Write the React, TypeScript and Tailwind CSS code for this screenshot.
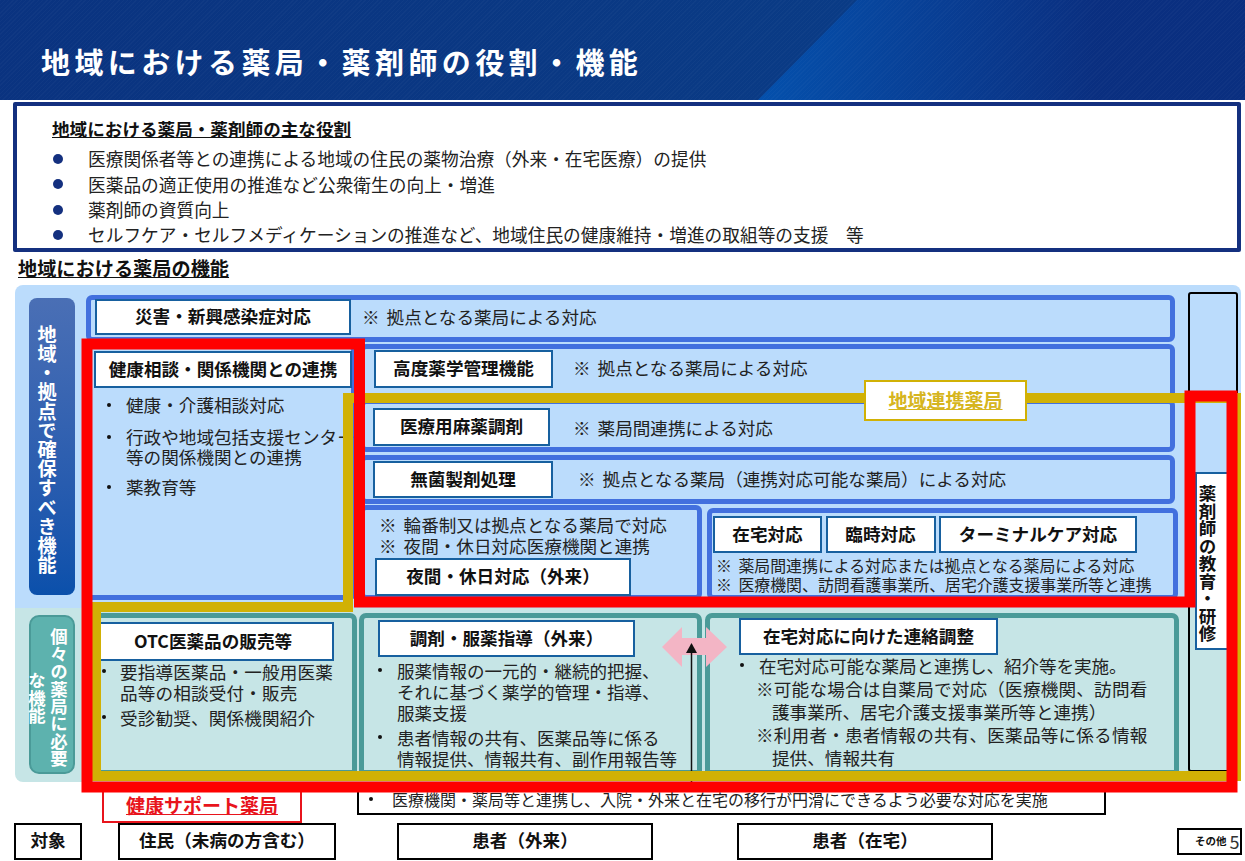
import type { ReactNode } from 'react';
import clsx from 'clsx';

function Tag({ className, children }: { className?: string; children: ReactNode }) {
  return (
    <div
      className={clsx(
        'flex shrink-0 items-center justify-center border-[2.5px] border-[#17609f] bg-white pb-[2px] text-[17.6px] leading-none font-bold text-[#111]',
        className,
      )}
    >
      {children}
    </div>
  );
}

function Dot() {
  return <span className="mt-[8px] mr-[15px] h-[4px] w-[4px] shrink-0 rounded-full bg-[#111]" />;
}

const roles = [
  '医療関係者等との連携による地域の住民の薬物治療（外来・在宅医療）の提供',
  '医薬品の適正使用の推進など公衆衛生の向上・増進',
  '薬剤師の資質向上',
  'セルフケア・セルフメディケーションの推進など、地域住民の健康維持・増進の取組等の支援　等',
];

export default function App() {
  return (
    <div className="relative h-[861px] w-[1245px] overflow-hidden whitespace-nowrap bg-white font-['Noto_Sans_CJK_JP',sans-serif] text-[#222]">
      {/* Header */}
      <div className="relative flex h-[100px] items-center overflow-hidden bg-linear-to-r from-[#0a3380] to-[#0a3f88] pt-[22px] pl-[41px]">
        <div className="absolute inset-0 bg-linear-to-r from-[#0450ac] from-[61%] to-[#0a2f80] to-[88%] [clip-path:polygon(857px_0,100%_0,100%_100%,758px_100%)]" />
        <div className="absolute inset-0 bg-[repeating-linear-gradient(135deg,rgba(255,255,255,0.025)_0_1px,transparent_1px_3px)]" />
        <h1 className="relative text-[29px] leading-none font-bold tracking-[4.4px] text-white">
          地域における薬局・薬剤師の役割・機能
        </h1>
      </div>

      {/* 主な役割 */}
      <div className="mt-[2px] ml-[13px] h-[150px] w-[1228px] rounded-[2px] border-4 border-[#14307f] pt-[12px] pl-[35px]">
        <div className="text-[17.6px] leading-[22px] font-bold text-[#111] underline">
          地域における薬局・薬剤師の主な役割
        </div>
        <ul className="mt-[7px]">
          {roles.map((role) => (
            <li key={role} className="flex h-[25.3px] items-center pb-[1px] text-[17.7px] leading-none">
              <span className="mr-[25px] ml-[1px] h-[10px] w-[10px] rounded-full bg-[#14307f]" />
              {role}
            </li>
          ))}
        </ul>
      </div>

      <div className="mt-[4px] pl-[18px] text-[19.2px] leading-[24px] font-bold text-[#111] underline">
        地域における薬局の機能
      </div>

      {/* 地域・拠点で確保すべき機能 */}
      <div className="mt-[5px] ml-[15px] flex h-[323px] w-[1226px] rounded-t-[8px] bg-[#bbdcfc] pt-[10px] pl-[14px]">
        <div className="mt-[3px] flex h-[297px] w-[46px] shrink-0 rounded-[8px] bg-linear-to-b from-[#4a6fb5] to-[#0a50ab] pt-[27px] pl-[5px]">
          <span className="text-[19.2px] leading-[26px] font-bold text-white [writing-mode:vertical-rl]">
            地域・拠点で確保すべき機能
          </span>
        </div>
        <div className="ml-[11px] w-[1092px]">
          <div className="flex h-[47px] w-[1089px] items-center rounded-[6px] border-[5px] border-[#4270de] pb-[3px] pl-[4px]">
            <Tag className="h-[36px] w-[256px]">災害・新興感染症対応</Tag>
            <span className="-mt-[1px] ml-[11px] text-[17.6px] leading-none [word-spacing:3px]">※ 拠点となる薬局による対応</span>
          </div>

          <div className="mt-[2px] flex">
            <div className="h-[256px] w-[270px] shrink-0 rounded-[6px] border-[5px] border-[#4270de] pt-[2px] pl-[3px]">
              <Tag className="h-[37px] w-[258px]">健康相談・関係機関との連携</Tag>
              <ul className="mt-[7px] pl-[13px] text-[17.6px] leading-[20px]">
                <li className="flex">
                  <Dot />
                  健康・介護相談対応
                </li>
                <li className="mt-[12px] flex">
                  <Dot />
                  <span>
                    行政や地域包括支援センター
                    <br />
                    等の関係機関との連携
                  </span>
                </li>
                <li className="mt-[10px] flex">
                  <Dot />
                  薬教育等
                </li>
              </ul>
            </div>

            <div className="ml-[4px] w-[818px]">
              <div className="flex h-[57px] w-[815px] items-center rounded-[6px] border-[5px] border-[#4270de] pb-[7px] pl-[9px]">
                <Tag className="h-[38px] w-[179px]">高度薬学管理機能</Tag>
                <span className="-mt-[2px] ml-[20px] text-[17.6px] leading-none [word-spacing:3px]">※ 拠点となる薬局による対応</span>
              </div>
              <div className="-mt-[2px] flex h-[53px] w-[815px] items-center rounded-[6px] border-[5px] border-[#4270de] pt-[3px] pl-[8px]">
                <Tag className="h-[38px] w-[177px]">医療用麻薬調剤</Tag>
                <span className="mt-[2px] ml-[23px] text-[17.6px] leading-none [word-spacing:3px]">※ 薬局間連携による対応</span>
              </div>
              <div className="mt-[3px] flex h-[49px] w-[815px] items-center rounded-[6px] border-[5px] border-[#4270de] pl-[8px]">
                <Tag className="h-[37px] w-[180px]">無菌製剤処理</Tag>
                <span className="-mt-[1px] ml-[25px] text-[17.6px] leading-none [word-spacing:3px]">
                  ※ 拠点となる薬局（連携対応可能な薬局）による対応
                </span>
              </div>
              <div className="mt-[1px] flex items-start">
                <div className="h-[95px] w-[342px] rounded-[6px] border-[5px] border-[#4270de] pt-[3.5px] pl-[10px]">
                  <div className="pl-[4px] text-[17.6px] leading-[21px] [word-spacing:3px]">
                    ※ 輪番制又は拠点となる薬局で対応
                    <br />※ 夜間・休日対応医療機関と連携
                  </div>
                  <Tag className="mt-[2.5px] h-[38px] w-[256px]">夜間・休日対応（外来）</Tag>
                </div>
                <div className="mt-[3px] ml-[5px] h-[92px] w-[471px] rounded-[6px] border-[5px] border-[#4270de] pt-[3px] pl-[1px]">
                  <div className="flex gap-[3.5px]">
                    <Tag className="h-[37px] w-[109px]">在宅対応</Tag>
                    <Tag className="h-[37px] w-[110px]">臨時対応</Tag>
                    <Tag className="h-[37px] w-[198px]">ターミナルケア対応</Tag>
                  </div>
                  <div className="mt-[3px] pl-[3px] text-[15.9px] leading-[19px] [word-spacing:3px]">
                    ※ 薬局間連携による対応または拠点となる薬局による対応
                    <br />※ 医療機関、訪問看護事業所、居宅介護支援事業所等と連携
                  </div>
                </div>
              </div>
            </div>
          </div>
        </div>
      </div>

      {/* 個々の薬局に必要な機能 */}
      <div className="ml-[15px] flex h-[174px] w-[1226px] rounded-b-[8px] bg-[#c6e5e6] pt-[5px] pl-[14px]">
        <div className="mt-[2px] flex h-[159px] w-[46px] shrink-0 rounded-[10px] border-2 border-[#4a9a98] bg-[#5db2ae] pt-[11px]">
          <span className="-ml-[5.5px] text-[17.4px] leading-[22px] font-bold text-white [writing-mode:vertical-rl]">
            <span className="block">個々の薬局に必要</span>
            <span className="block pt-[44px]">な機能</span>
          </span>
        </div>

        <div className="ml-[17px] h-[162px] w-[265px] shrink-0 rounded-t-[7px] border-[5px] border-[#4a9a98] pt-[4px]">
          <Tag className="-ml-[5px] h-[39px] w-[242px]">OTC医薬品の販売等</Tag>
          <ul className="-mt-[0.5px] pl-[5px] text-[17.6px] leading-[21px] tracking-[0.15px]">
            <li className="flex">
              <span className="mt-[8px] mr-[14px] h-[4px] w-[4px] shrink-0 rounded-full bg-[#111]" />
              <span>
                要指導医薬品・一般用医薬
                <br />
                品等の相談受付・販売
              </span>
            </li>
            <li className="mt-[4px] flex">
              <span className="mt-[8px] mr-[14px] h-[4px] w-[4px] shrink-0 rounded-full bg-[#111]" />
              受診勧奨、関係機関紹介
            </li>
          </ul>
        </div>

        <div className="ml-[2px] h-[162px] w-[343px] shrink-0 rounded-t-[7px] border-[5px] border-[#4a9a98] pt-[2px] pl-[14px]">
          <Tag className="h-[37px] w-[257px]">調剤・服薬指導（外来）</Tag>
          <ul className="mt-[2.5px] text-[17.5px] leading-[21px]">
            <li className="flex">
              <span className="mt-[8px] mr-[15px] h-[4px] w-[4px] shrink-0 rounded-full bg-[#111]" />
              <span>
                服薬情報の一元的・継続的把握、
                <br />
                それに基づく薬学的管理・指導、
                <br />
                服薬支援
              </span>
            </li>
            <li className="mt-[4px] flex">
              <span className="mt-[8px] mr-[15px] h-[4px] w-[4px] shrink-0 rounded-full bg-[#111]" />
              <span>
                患者情報の共有、医薬品等に係る
                <br />
                情報提供、情報共有、副作用報告等
              </span>
            </li>
          </ul>
        </div>

        <div className="ml-[3px] h-[162px] w-[474px] shrink-0 rounded-t-[7px] border-[5px] border-[#4a9a98] pl-[29px]">
          <Tag className="h-[37px] w-[259px]">在宅対応に向けた連絡調整</Tag>
          <div className="-mt-[1px] text-[17.6px] leading-[23px]">
            <div className="flex">
              <span className="mt-[9px] ml-[1px] mr-[15px] h-[4px] w-[4px] shrink-0 rounded-full bg-[#111]" />
              <span className="tracking-[-0.1px]">在宅対応可能な薬局と連携し、紹介等を実施。</span>
            </div>
            <div className="pl-[17px] tracking-[0.2px]">※可能な場合は自薬局で対応（医療機関、訪問看</div>
            <div className="pl-[33px]">護事業所、居宅介護支援事業所等と連携）</div>
            <div className="pl-[17px] tracking-[0.2px]">※利用者・患者情報の共有、医薬品等に係る情報</div>
            <div className="pl-[33px]">提供、情報共有</div>
          </div>
        </div>
      </div>

      {/* 健康サポート薬局 / 対象 */}
      <div className="flex h-[40px] items-start">
        <div className="ml-[102px] flex h-[41px] w-[200px] items-center justify-center border-2 border-[#e8141c] pt-[3px] text-[19px] leading-none font-bold text-[#e8141c] underline">
          健康サポート薬局
        </div>
        <div className="ml-[55px] flex h-[33px] w-[749px] items-center border-2 border-black pl-[10px] text-[16px] leading-none">
          <span className="mr-[19px] h-[4px] w-[4px] rounded-full bg-[#111]" />
          医療機関・薬局等と連携し、入院・外来と在宅の移行が円滑にできるよう必要な対応を実施
        </div>
      </div>
      <div className="relative flex h-[38px] items-center text-[17.6px] leading-none font-bold text-[#111]">
        <div className="ml-[14px] flex h-[37px] w-[68px] items-center justify-center border-[2.5px] border-black bg-white pb-[2px]">対象</div>
        <div className="ml-[36px] flex h-[37px] w-[218px] items-center justify-center border-[2.5px] border-black bg-white pb-[2px]">住民（未病の方含む）</div>
        <div className="ml-[61px] flex h-[37px] w-[256px] items-center justify-center border-[2.5px] border-black bg-white pb-[2px]">患者（外来）</div>
        <div className="ml-[84px] flex h-[37px] w-[256px] items-center justify-center border-[2.5px] border-black bg-white pb-[2px]">患者（在宅）</div>
        <div className="ml-[184px] flex h-[27px] w-[65px] items-center border-2 border-black pl-[16px] text-[10.5px]">
          その他
          <span className="ml-[3px] text-[18px] font-normal text-[#333]">5</span>
        </div>
      </div>

      {/* Overlays */}
      <div className="absolute top-[292px] left-[1188px] h-[480px] w-[50px] rounded-[3px] border-2 border-black" />
      <div className="absolute top-[472px] left-[1195px] flex h-[178px] w-[40px] border-2 border-[#17609f] bg-white pt-[11px]">
        <span className="-ml-[1px] text-[17.5px] leading-[22px] font-bold text-[#111] [writing-mode:vertical-rl]">
          薬剤師の教育・研修
        </span>
      </div>

      <svg className="pointer-events-none absolute top-0 left-0" width="1245" height="861" viewBox="0 0 1245 861">
        <polygon
          points="662,647 682,627 682,638 706,638 706,627 727,647 706,667 706,655 682,655 682,667"
          fill="#f3b5c5"
        />
        <line x1="691.5" y1="650" x2="691.5" y2="783" stroke="#111" strokeWidth="1.5" />
        <polygon points="691.5,643 697,653 686,653" fill="#111" />
        <path d="M348 398H1236V776H96V607H348Z" fill="none" stroke="#d1b105" strokeWidth="10" />
        <path d="M87 344H359.5V602H1190V396H1232V787H87Z" fill="none" stroke="#ff0000" strokeWidth="11" />
      </svg>

      <div className="absolute top-[380px] left-[864px] flex h-[41px] w-[163px] items-center justify-center border-2 border-[#d1b105] bg-white pb-[2px] text-[19px] leading-none font-bold text-[#d6b520] underline">
        地域連携薬局
      </div>
    </div>
  );
}
